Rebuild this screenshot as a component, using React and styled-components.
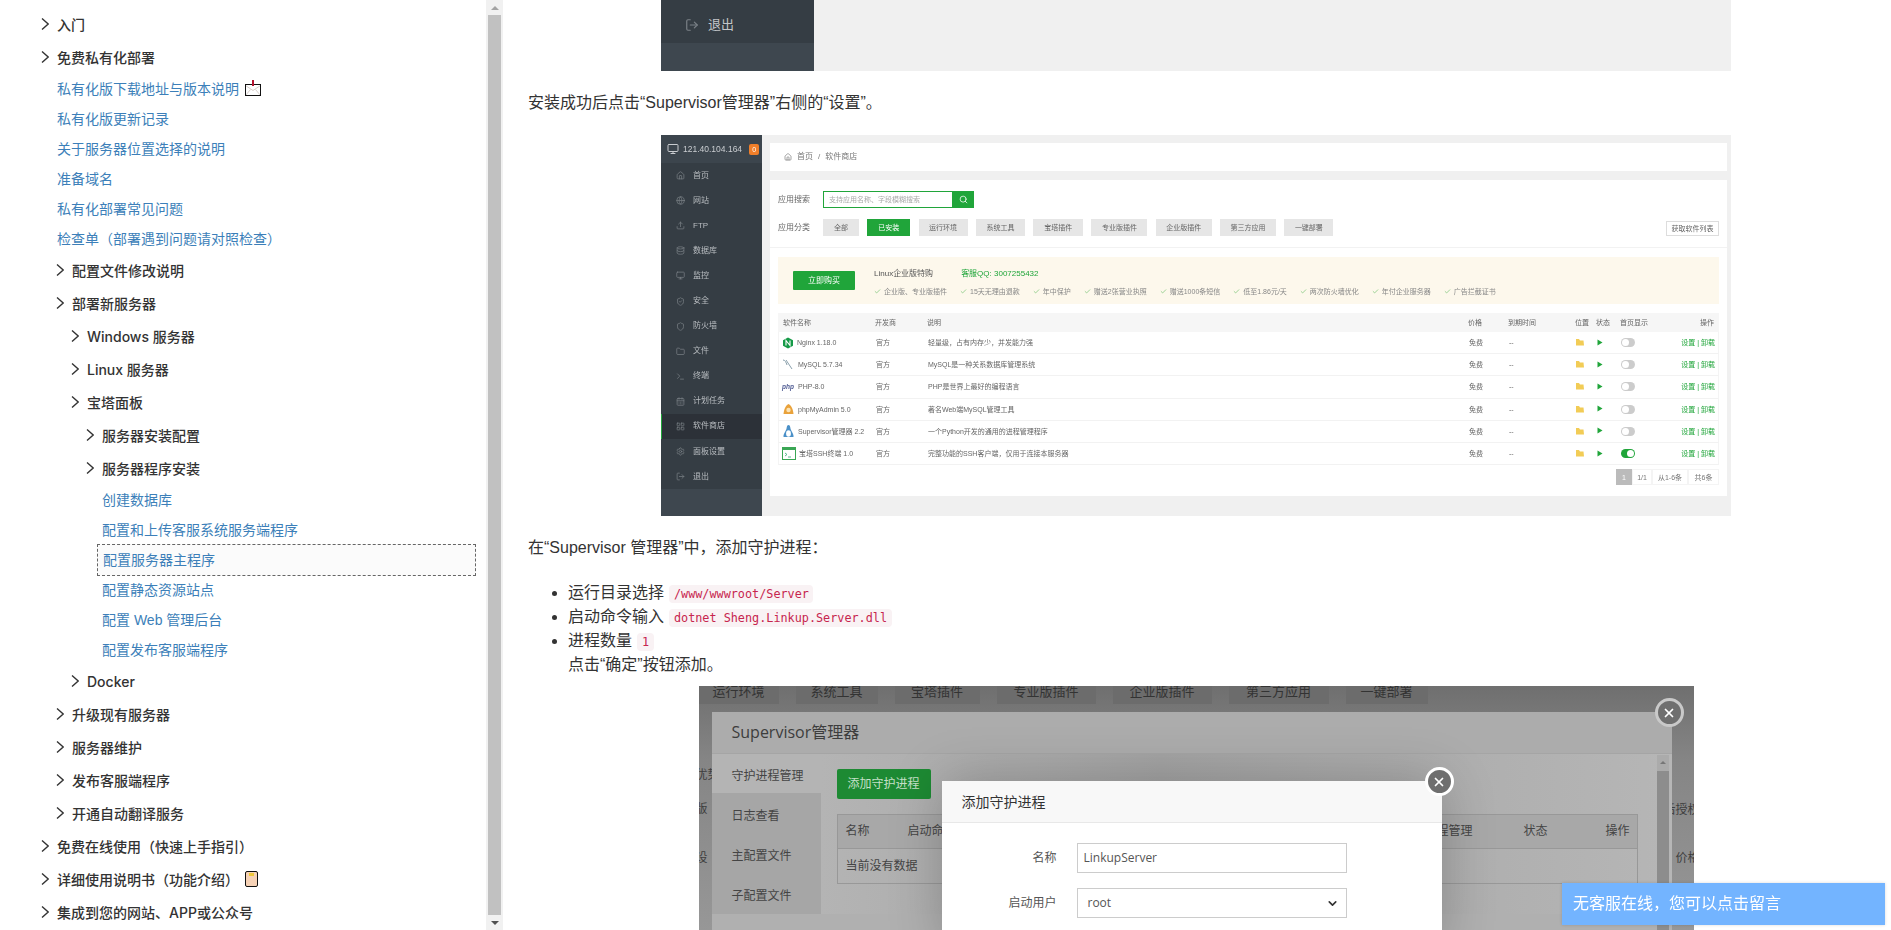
import React from "react";
import styled, { createGlobalStyle } from "styled-components";
import {
  Home, Globe, Upload, Database, Monitor, ShieldCheck, Shield, Folder, Terminal,
  CalendarDays, LayoutGrid, Settings, LogOut, Search, Check, X, ChevronDown,
} from "lucide-react";

const SANS = `"Liberation Sans", "Noto Sans CJK SC", sans-serif`;

const GlobalStyle = createGlobalStyle`
  html, body { margin: 0; padding: 0; height: 100%; overflow: hidden; background: #fff; }
  * { box-sizing: border-box; }
`;

const Page = styled.div`
  display: flex;
  width: 100%;
  height: 930px;
  overflow: hidden;
  font-family: ${SANS};
  color: #333;
`;

/* left navigation */
const Nav = styled.nav`
  width: 486px;
  flex: none;
  padding-top: 7.5px;
  font-size: 14px;
`;
const FolderRow = styled.div`
  display: flex;
  align-items: center;
  height: 33px;
  padding-left: ${(p) => 41 + p.$level * 15}px;
  font-family: Inter, "Noto Sans CJK SC", sans-serif;
  font-weight: 500;
  color: #333;
`;
const LinkRow = styled.a`
  display: flex;
  align-items: center;
  height: 30px;
  padding-bottom: 2px;
  padding-left: ${(p) => 57 + p.$level * 15}px;
  color: #3c7fb9;
`;
const ActiveLink = styled(LinkRow)`
  height: 32px;
  margin: -1px 10px -1px ${(p) => 52 + p.$level * 15}px;
  padding-left: 5px;
  border: 1px dashed #666;
  background: #fbfbfb;
`;
const Chevron = styled.svg`
  width: 8px;
  height: 12px;
  flex: none;
  margin-right: 8px;
  fill: none;
  stroke: #333;
  stroke-width: 1.4;
`;
const Emoji = styled.svg`
  flex: none;
  margin-left: 6px;
`;

const PostIcon = () => (
  <Emoji width="16" height="16" viewBox="0 0 16 16">
    <path d="M.5 5.5l7.5 5 7.5-5M.5 15.5l5-6M15.5 15.5l-5-6" fill="none" stroke="#d9cfcb" />
    <rect x=".5" y="4.5" width="15" height="11" fill="none" stroke="#111" />
    <path d="M8 0v6" stroke="#b3122e" strokeWidth="2" />
  </Emoji>
);
const NoteIcon = () => (
  <Emoji width="13" height="16" viewBox="0 0 13 16">
    <rect x=".5" y=".5" width="12" height="15" rx="1.5" fill="#f6d2b6" stroke="#111" />
    <rect x="4" y="2" width="5" height="3" fill="#efc83a" />
  </Emoji>
);

// links directly under the first section sit one step further left than their siblings
const menu = [
  { t: "入门" },
  {
    t: "免费私有化部署",
    kids: [
      { t: "私有化版下载地址与版本说明", link: true, indent: 0, icon: <PostIcon /> },
      { t: "私有化版更新记录", link: true, indent: 0 },
      { t: "关于服务器位置选择的说明", link: true, indent: 0 },
      { t: "准备域名", link: true, indent: 0 },
      { t: "私有化部署常见问题", link: true, indent: 0 },
      { t: "检查单（部署遇到问题请对照检查）", link: true, indent: 0 },
      { t: "配置文件修改说明" },
      {
        t: "部署新服务器",
        kids: [
          { t: "Windows 服务器" },
          { t: "Linux 服务器" },
          {
            t: "宝塔面板",
            kids: [
              { t: "服务器安装配置" },
              { t: "服务器程序安装" },
              { t: "创建数据库", link: true },
              { t: "配置和上传客服系统服务端程序", link: true },
              { t: "配置服务器主程序", link: true, active: true },
              { t: "配置静态资源站点", link: true },
              { t: "配置 Web 管理后台", link: true },
              { t: "配置发布客服端程序", link: true },
            ],
          },
          { t: "Docker" },
        ],
      },
      { t: "升级现有服务器" },
      { t: "服务器维护" },
      { t: "发布客服端程序" },
      { t: "开通自动翻译服务" },
    ],
  },
  { t: "免费在线使用（快速上手指引）" },
  { t: "详细使用说明书（功能介绍）", icon: <NoteIcon /> },
  { t: "集成到您的网站、APP或公众号" },
];

function MenuItems({ items, level }) {
  return items.map((item) => {
    if (item.link) {
      const Row = item.active ? ActiveLink : LinkRow;
      return (
        <Row key={item.t} $level={item.indent ?? level}>
          {item.t}
          {item.icon}
        </Row>
      );
    }
    return (
      <React.Fragment key={item.t}>
        <FolderRow $level={level}>
          <Chevron viewBox="0 0 8 12">
            <path d="M1 .5L7.2 6 1 11.5" />
          </Chevron>
          {item.t}
          {item.icon}
        </FolderRow>
        {item.kids && <MenuItems items={item.kids} level={level + 1} />}
      </React.Fragment>
    );
  });
}

const ScrollTrack = styled.div`
  width: 17px;
  flex: none;
  display: flex;
  flex-direction: column;
  align-items: center;
  background: #f1f1f1;
`;
const ScrollArrow = styled.div`
  height: 15px;
  flex: none;
  display: flex;
  align-items: center;
  justify-content: center;
  &::before {
    content: "";
    border-left: 4px solid transparent;
    border-right: 4px solid transparent;
    ${(p) => (p.$down ? "border-top: 4px solid #505050;" : "border-bottom: 4px solid #a3a3a3;")}
  }
`;
const ScrollThumb = styled.div`
  flex: 1;
  width: 13px;
  background: #c1c1c1;
`;

/* article */
const Article = styled.main`
  flex: 1;
  min-width: 0;
  padding: 0 27px 0 25px;
  font-size: 16px;
  line-height: 24px;
  color: #333;
`;
const Para = styled.p`
  margin: ${(p) => p.$top}px 0 ${(p) => p.$bottom}px;
`;
const Steps = styled.ul`
  margin: 0 0 9px;
  padding-left: 40px;
`;
const Code = styled.code`
  margin: 0 1px;
  padding: 2px 4.5px;
  font-family: "DejaVu Sans Mono", monospace;
  font-size: 11.8px;
  line-height: 1;
  color: #c7254e;
  background: #f9f2f4;
  border-radius: 4px;
`;
const ShotFrame = styled.div`
  position: relative;
  width: ${(p) => p.$width}px;
  height: ${(p) => p.$height}px;
  margin: 0 auto;
  overflow: hidden;
`;

/* cropped panel on top */
const CropSide = styled.div`
  display: flex;
  flex-direction: column;
  width: 153px;
  height: 100%;
  color: #c3c6c9;
  background: #353d44;
`;
const CropExit = styled.div`
  display: flex;
  align-items: center;
  gap: 9px;
  height: 43px;
  padding: 7px 0 0 24px;
  font-size: 13px;
  svg { color: #7b8187; }
`;
const CropRest = styled.div`
  flex: 1;
  background: #3e474f;
`;
const CropShot = styled(ShotFrame)`
  background: #f0f0f0;
`;

/* small bt panel screenshot */
const Panel = styled(ShotFrame)`
  display: flex;
  background: #f0f0f0;
  font-size: 7px;
  line-height: 1;
  color: #666;
  filter: blur(0.45px);
`;
const Side = styled.div`
  display: flex;
  flex-direction: column;
  width: 101px;
  flex: none;
  background: #3e474f;
  color: #b9bdc1;
  font-size: 8px;
`;
const SideHead = styled.div`
  display: flex;
  align-items: center;
  gap: 4px;
  height: 28px;
  padding-left: 6px;
  color: #c9ccd0;
  font-size: 8.5px;
  background: #3c454d;
`;
const SideBadge = styled.span`
  width: 10px;
  height: 11px;
  margin-left: 3px;
  color: #fff;
  font-size: 7px;
  line-height: 11px;
  text-align: center;
  background: #f07f2a;
  border-radius: 2px;
`;
const SideRow = styled.div`
  display: flex;
  align-items: center;
  gap: 8px;
  height: 25.1px;
  padding-left: ${(p) => (p.$active ? 14 : 15)}px;
  background: ${(p) => (p.$active ? "#2c3138" : "#353d44")};
  border-left: ${(p) => (p.$active ? "1px solid #20a53a" : "0")};
  svg { color: #777d83; flex: none; }
`;
const Body = styled.div`
  flex: 1;
  min-width: 0;
  display: flex;
  flex-direction: column;
  gap: 9px;
  padding: 8px 4px 20px 8px;
`;
const Crumbs = styled.div`
  display: flex;
  align-items: center;
  gap: 5px;
  height: 28px;
  padding-left: 14px;
  font-size: 8px;
  color: #777;
  background: #fff;
`;
const Card = styled.div`
  flex: 1;
  padding: 11px 8px 0;
  background: #fff;
`;
const ToolRow = styled.div`
  display: flex;
  align-items: center;
  height: 17px;
  margin-bottom: 11px;
`;
const ToolLabel = styled.span`
  width: 45px;
  flex: none;
  font-size: 8px;
`;
const SearchInput = styled.div`
  display: flex;
  align-items: center;
  width: 129px;
  height: 17px;
  padding-left: 5px;
  color: #aaa;
  border: 1px solid #20a53a;
  border-right: 0;
`;
const SearchButton = styled.div`
  display: flex;
  align-items: center;
  justify-content: center;
  width: 22px;
  height: 17px;
  color: #fff;
  background: #20a53a;
`;
const Tabs = styled.div`
  display: flex;
  flex: 1;
  gap: 8.3px;
`;
const Tab = styled.div`
  display: flex;
  align-items: center;
  justify-content: center;
  width: ${(p) => p.$w}px;
  height: 17px;
  color: ${(p) => (p.$on ? "#fff" : "#666")};
  background: ${(p) => (p.$on ? "#20a53a" : "#e6e6e6")};
`;
const ListButton = styled.div`
  display: flex;
  align-items: center;
  justify-content: center;
  width: 53px;
  height: 15px;
  margin-top: 2px;
  border: 1px solid #ddd;
`;
const Rule = styled.div`
  height: 1px;
  margin: 0 -8px 9px;
  background: #f2f2f2;
`;
const Banner = styled.div`
  display: flex;
  align-items: center;
  height: 47px;
  margin-bottom: 9px;
  padding-left: 15px;
  background: #fdf8ec;
`;
const BuyButton = styled.div`
  display: flex;
  align-items: center;
  justify-content: center;
  width: 62px;
  height: 19px;
  margin-right: 19px;
  color: #fff;
  font-size: 8px;
  background: #20a53a;
  border-radius: 1px;
`;
const BannerBody = styled.div`
  display: flex;
  flex-direction: column;
  gap: 10px;
  padding-top: 4px;
`;
const BannerTop = styled.div`
  display: flex;
  align-items: center;
  gap: 28px;
  font-size: 8px;
  color: #555;
`;
const QQ = styled.span`
  display: flex;
  align-items: center;
  gap: 3px;
  color: #20a53a;
`;
const Perks = styled.div`
  display: flex;
  gap: 13px;
  color: #888;
`;
const Perk = styled.span`
  display: flex;
  align-items: center;
  gap: 3px;
  svg { color: #5cb85c; }
`;
const Grid = styled.div`
  display: grid;
  grid-template-columns: 97px 52px 541px 40px 67px 21px 24px 60px 39px;
  align-items: center;
  height: ${(p) => (p.$head ? 19 : 22.2)}px;
  background: ${(p) => (p.$head ? "#f6f6f6" : "#fff")};
  border-bottom: ${(p) => (p.$head ? "0" : "1px solid #f2f2f2")};
  border-left: ${(p) => (p.$head ? "0" : "1px solid #f4f4f4")};
  border-right: ${(p) => (p.$head ? "0" : "1px solid #f4f4f4")};
`;
const NameCell = styled.div`
  display: flex;
  align-items: center;
  gap: 3px;
  padding-left: ${(p) => (p.$head ? 5 : 3)}px;
  white-space: nowrap;
`;
const Op = styled.div`
  padding-right: 5px;
  text-align: right;
  color: ${(p) => (p.$head ? "#666" : "#20a53a")};
  white-space: nowrap;
`;
const Toggle = styled.div`
  position: relative;
  width: 14px;
  height: 9px;
  background: ${(p) => (p.$on ? "#20a53a" : "#ccc")};
  border-radius: 5px;
  &::after {
    content: "";
    position: absolute;
    top: 1px;
    left: ${(p) => (p.$on ? 6 : 1)}px;
    width: 7px;
    height: 7px;
    background: #fff;
    border-radius: 50%;
  }
`;
const Pager = styled.div`
  display: flex;
  justify-content: flex-end;
  margin-top: 4px;
`;
const PagerCell = styled.div`
  display: flex;
  align-items: center;
  justify-content: center;
  width: ${(p) => p.$w}px;
  height: 16px;
  color: ${(p) => (p.$on ? "#fff" : "#777")};
  background: ${(p) => (p.$on ? "#bbb" : "#fff")};
  border: ${(p) => (p.$on ? "0" : "1px solid #f4f4f4")};
`;
const PhpMark = styled.span`
  width: 13px;
  color: #4f5b93;
  font-size: 6.5px;
  font-style: italic;
  font-weight: 700;
`;

const sideItems = [
  [Home, "首页"], [Globe, "网站"], [Upload, "FTP"], [Database, "数据库"], [Monitor, "监控"],
  [ShieldCheck, "安全"], [Shield, "防火墙"], [Folder, "文件"], [Terminal, "终端"],
  [CalendarDays, "计划任务"], [LayoutGrid, "软件商店"], [Settings, "面板设置"], [LogOut, "退出"],
];
const tabs = [
  ["全部", 36], ["已安装", 43], ["运行环境", 49], ["系统工具", 49], ["宝塔插件", 50], ["专业版插件", 56],
  ["企业版插件", 56], ["第三方应用", 56], ["一键部署", 49],
];
const perks = [
  "企业版、专业版插件", "15天无理由退款", "年中保护", "赠送2张营业执照", "赠送1000条短信",
  "低至1.86元/天", "两次防火墙优化", "年付企业服务器", "广告拦截证书",
];

const NginxIcon = () => (
  <svg width="12" height="12" viewBox="0 0 12 12">
    <path d="M6 .5l5 2.8v5.4l-5 2.8-5-2.8V3.3z" fill="#159a47" />
    <path d="M4 8.5v-5l4 5v-5" fill="none" stroke="#fff" strokeWidth="1.1" />
  </svg>
);
const MysqlIcon = () => (
  <svg width="13" height="12" viewBox="0 0 13 12">
    <path d="M1 1c2 0 3 2 4 5M4 1l6 9" fill="none" stroke="#8aa0ac" strokeWidth="1" />
  </svg>
);
const AdminIcon = () => (
  <svg width="13" height="12" viewBox="0 0 13 12">
    <path d="M6.5 1C3 3 2 7 1.5 11h10C11 7 10 3 6.5 1z" fill="#e9a23b" />
    <circle cx="6.5" cy="7" r="2.2" fill="#fbe3b4" />
  </svg>
);
const PenguinIcon = () => (
  <svg width="13" height="15" viewBox="0 0 13 15">
    <path d="M6.5 1C4.5 1 5 4 4 6c-1 2-3 5-2.5 7h10c.5-2-1.5-5-2.5-7-1-2-.5-5-2.5-5z" fill="#4a90c8" />
    <ellipse cx="6.5" cy="9.5" rx="2.4" ry="3.2" fill="#fff" />
  </svg>
);
const SshIcon = () => (
  <svg width="14" height="13" viewBox="0 0 14 13">
    <rect x=".5" y=".5" width="13" height="12" fill="#fff" stroke="#3aa655" />
    <rect x=".5" y=".5" width="13" height="2.5" fill="#3aa655" />
    <path d="M3 6l2 1.5L3 9M6 10h3" fill="none" stroke="#3a7" strokeWidth=".8" />
  </svg>
);
const FolderMark = () => (
  <svg width="8" height="8" viewBox="0 0 8 8">
    <path d="M0 1h3l1 1.5h3.5l.5 5H0z" fill="#f2cc56" />
  </svg>
);
const PlayMark = () => (
  <svg width="6" height="7" viewBox="0 0 6 7">
    <path d="M.5.5l5 3-5 3z" fill="#20a53a" />
  </svg>
);

const software = [
  [<NginxIcon />, "Nginx 1.18.0", "轻量级，占有内存少，并发能力强"],
  [<MysqlIcon />, "MySQL 5.7.34", "MySQL是一种关系数据库管理系统"],
  [<PhpMark>php</PhpMark>, "PHP-8.0", "PHP是世界上最好的编程语言"],
  [<AdminIcon />, "phpMyAdmin 5.0", "著名Web端MySQL管理工具"],
  [<PenguinIcon />, "Supervisor管理器 2.2", "一个Python开发的通用的进程管理程序"],
  [<SshIcon />, "宝塔SSH终端 1.0", "完整功能的SSH客户端，仅用于连接本服务器"],
];

function StorePanel() {
  return (
    <Panel $width={1070} $height={381}>
      <Side>
        <SideHead>
          <Monitor size={12} />
          121.40.104.164
          <SideBadge>0</SideBadge>
        </SideHead>
        {sideItems.map(([Icon, label]) => (
          <SideRow key={label} $active={label === "软件商店"}>
            <Icon size={9} />
            {label}
          </SideRow>
        ))}
      </Side>
      <Body>
        <Crumbs>
          <Home size={8} /> 首页 <span>/</span> 软件商店
        </Crumbs>
        <Card>
          <ToolRow>
            <ToolLabel>应用搜索</ToolLabel>
            <SearchInput>支持应用名称、字段模糊搜索</SearchInput>
            <SearchButton><Search size={9} /></SearchButton>
          </ToolRow>
          <ToolRow>
            <ToolLabel>应用分类</ToolLabel>
            <Tabs>
              {tabs.map(([t, w]) => (
                <Tab key={t} $w={w} $on={t === "已安装"}>{t}</Tab>
              ))}
            </Tabs>
            <ListButton>获取软件列表</ListButton>
          </ToolRow>
          <Rule />
          <Banner>
            <BuyButton>立即购买</BuyButton>
            <BannerBody>
              <BannerTop>
                <span>Linux企业版特购</span>
                <QQ>客服QQ: 3007255432</QQ>
              </BannerTop>
              <Perks>
                {perks.map((p) => (
                  <Perk key={p}><Check size={7} />{p}</Perk>
                ))}
              </Perks>
            </BannerBody>
          </Banner>
          <Grid $head>
            <NameCell $head>软件名称</NameCell>
            <div>开发商</div>
            <div>说明</div>
            <div>价格</div>
            <div>到期时间</div>
            <div>位置</div>
            <div>状态</div>
            <div>首页显示</div>
            <Op $head>操作</Op>
          </Grid>
          {software.map(([icon, name, desc], i) => (
            <Grid key={name}>
              <NameCell>{icon}{name}</NameCell>
              <div>官方</div>
              <div>{desc}</div>
              <div>免费</div>
              <div>--</div>
              <div><FolderMark /></div>
              <div><PlayMark /></div>
              <div><Toggle $on={i === 5} /></div>
              <Op>设置 | 卸载</Op>
            </Grid>
          ))}
          <Pager>
            <PagerCell $w={16} $on>1</PagerCell>
            <PagerCell $w={20}>1/1</PagerCell>
            <PagerCell $w={36}>从1-6条</PagerCell>
            <PagerCell $w={31}>共6条</PagerCell>
          </Pager>
        </Card>
      </Body>
    </Panel>
  );
}

/* supervisor dialog screenshot */
const Dim = styled(ShotFrame)`
  font-family: "Open Sans", "Noto Sans CJK SC", sans-serif;
  font-size: 12px;
  line-height: 1.2;
  color: #444;
  background: linear-gradient(#6f6f6f, #858585 30%, #979797);
`;
const BackTabs = styled.div`
  display: flex;
  gap: 17px;
  height: 18px;
`;
const BackTab = styled.div`
  display: flex;
  justify-content: center;
  width: ${(p) => p.$w}px;
  color: #333;
  font-size: 13px;
  line-height: 10px;
  background: #6c6c6c;
`;
const Modal = styled.div`
  position: absolute;
  top: 26px;
  left: 13px;
  width: 960px;
  height: 230px;
  background: #b0b0b0;
`;
const ModalTitle = styled.div`
  height: 42px;
  padding-left: 20px;
  font-size: 16px;
  line-height: 40px;
  color: #3d3d3d;
  background: #acacac;
  border-bottom: 1px solid #a5a5a5;
`;
const ModalBody = styled.div`
  display: flex;
`;
const ModalTabs = styled.div`
  width: 109px;
  flex: none;
  background: linear-gradient(#b4b4b4 39px, #a6a6a6 39px);
`;
const ModalTab = styled.div`
  height: 40px;
  padding-left: 20px;
  line-height: 43px;
`;
const ModalMain = styled.div`
  flex: 1;
  padding: 15px 0 0 16px;
  background: linear-gradient(90deg, #b4b4b4, #a4a4a4 40%, #b6b6b6);
`;
const GreenButton = styled.div`
  width: 94px;
  height: 30px;
  color: #c5e0c8;
  line-height: 30px;
  text-align: center;
  background: #1d8a33;
  border-radius: 2px;
`;
const ProcTable = styled.div`
  width: 801px;
  margin-top: 15px;
  border: 1px solid #989898;
`;
const ProcRow = styled.div`
  display: grid;
  grid-template-columns: 62px 517px 99px 82px 1fr;
  align-items: center;
  height: 34px;
  padding-left: 8px;
  background: ${(p) => (p.$head ? "#a8a8a8" : "transparent")};
  border-bottom: ${(p) => (p.$head ? "1px solid #989898" : "0")};
`;
const ModalScroll = styled.div`
  position: absolute;
  top: 43px;
  right: 3px;
  width: 12px;
  height: 190px;
  padding-top: 16px;
  background: #ababab;
  &::before {
    content: "";
    position: absolute;
    top: 6px;
    left: 3px;
    border-left: 3px solid transparent;
    border-right: 3px solid transparent;
    border-bottom: 3px solid #777;
  }
  &::after {
    content: "";
    display: block;
    height: 100%;
    background: #8d8d8d;
  }
`;
const Behind = styled.div`
  position: absolute;
  top: ${(p) => p.$top}px;
  ${(p) => (p.$right ? "right: -6px;" : "left: -3px;")}
  font-size: 12px;
  color: #3e3e3e;
`;
const Dialog = styled.div`
  position: absolute;
  top: 95px;
  left: 243px;
  width: 500px;
  height: 170px;
  background: #fff;
  box-shadow: 0 0 50px rgba(0, 0, 0, 0.22);
`;
const DialogTitle = styled.div`
  height: 42px;
  padding-left: 20px;
  font-size: 14px;
  line-height: 42px;
  color: #333;
  background: #f8f8f8;
  border-bottom: 1px solid #e8e8e8;
`;
const FormRow = styled.div`
  display: flex;
  align-items: center;
  gap: 20px;
  margin-top: ${(p) => p.$top}px;
`;
const FormLabel = styled.span`
  width: 115px;
  color: #555;
  text-align: right;
`;
const Field = styled.div`
  display: flex;
  align-items: center;
  justify-content: space-between;
  width: 270px;
  height: 30px;
  padding: 0 7px 0 ${(p) => (p.$select ? 10 : 6)}px;
  color: #555;
  border: 1px solid #ccc;
`;
const CloseDot = styled.div`
  position: absolute;
  top: ${(p) => p.$top}px;
  left: ${(p) => p.$left}px;
  display: flex;
  align-items: center;
  justify-content: center;
  width: 29px;
  height: 29px;
  color: #fff;
  background: #6f6f6f;
  border: 3px solid ${(p) => p.$ring};
  border-radius: 50%;
`;
const ChatTab = styled.div`
  position: fixed;
  right: 6px;
  bottom: 5px;
  width: 323px;
  height: 42px;
  padding-left: 11px;
  color: #fff;
  font-size: 16px;
  line-height: 42px;
  background: #73b4ff;
  box-shadow: 0 0 3px rgba(0, 0, 0, 0.15);
`;

function SupervisorShot() {
  return (
    <Dim $width={995} $height={244}>
      <BackTabs>
        <BackTab $w={80}>运行环境</BackTab>
        <BackTab $w={82}>系统工具</BackTab>
        <BackTab $w={85}>宝塔插件</BackTab>
        <BackTab $w={99}>专业版插件</BackTab>
        <BackTab $w={99}>企业版插件</BackTab>
        <BackTab $w={100}>第三方应用</BackTab>
        <BackTab $w={82}>一键部署</BackTab>
      </BackTabs>
      <Behind $top={82}>优势</Behind>
      <Behind $top={116}>版</Behind>
      <Behind $top={165}>设</Behind>
      <Behind $top={117} $right>后授权</Behind>
      <Behind $top={165} $right>价格</Behind>
      <Modal>
        <ModalTitle>Supervisor管理器</ModalTitle>
        <ModalBody>
          <ModalTabs>
            <ModalTab>守护进程管理</ModalTab>
            <ModalTab>日志查看</ModalTab>
            <ModalTab>主配置文件</ModalTab>
            <ModalTab>子配置文件</ModalTab>
          </ModalTabs>
          <ModalMain>
            <GreenButton>添加守护进程</GreenButton>
            <ProcTable>
              <ProcRow $head>
                <span>名称</span>
                <span>启动命令</span>
                <span>进程管理</span>
                <span>状态</span>
                <span>操作</span>
              </ProcRow>
              <ProcRow>
                <span style={{ gridColumn: "1 / 3" }}>当前没有数据</span>
              </ProcRow>
            </ProcTable>
          </ModalMain>
        </ModalBody>
        <ModalScroll />
      </Modal>
      <CloseDot $top={12} $left={956} $ring="#c9c9c9"><X size={14} strokeWidth={3} /></CloseDot>
      <Dialog>
        <DialogTitle>添加守护进程</DialogTitle>
        <FormRow $top={20}>
          <FormLabel>名称</FormLabel>
          <Field>LinkupServer</Field>
        </FormRow>
        <FormRow $top={15}>
          <FormLabel>启动用户</FormLabel>
          <Field $select>root<ChevronDown size={13} strokeWidth={3} color="#333" /></Field>
        </FormRow>
      </Dialog>
      <CloseDot $top={81} $left={726} $ring="#fff"><X size={14} strokeWidth={3} /></CloseDot>
    </Dim>
  );
}

export default function App() {
  return (
    <Page>
      <GlobalStyle />
      <Nav>
        <MenuItems items={menu} level={0} />
      </Nav>
      <ScrollTrack>
        <ScrollArrow />
        <ScrollThumb />
        <ScrollArrow $down />
      </ScrollTrack>
      <Article>
        <CropShot $width={1070} $height={71}>
          <CropSide>
            <CropExit><LogOut size={14} />退出</CropExit>
            <CropRest />
          </CropSide>
        </CropShot>
        <Para $top={20} $bottom={20}>安装成功后点击“Supervisor管理器”右侧的“设置”。</Para>
        <StorePanel />
        <Para $top={20} $bottom={21}>在“Supervisor 管理器”中，添加守护进程：</Para>
        <Steps>
          <li>运行目录选择 <Code>/www/wwwroot/Server</Code></li>
          <li>启动命令输入 <Code>dotnet Sheng.Linkup.Server.dll</Code></li>
          <li>进程数量 <Code>1</Code><br />点击“确定”按钮添加。</li>
        </Steps>
        <SupervisorShot />
      </Article>
      <ChatTab>无客服在线，您可以点击留言</ChatTab>
    </Page>
  );
}
